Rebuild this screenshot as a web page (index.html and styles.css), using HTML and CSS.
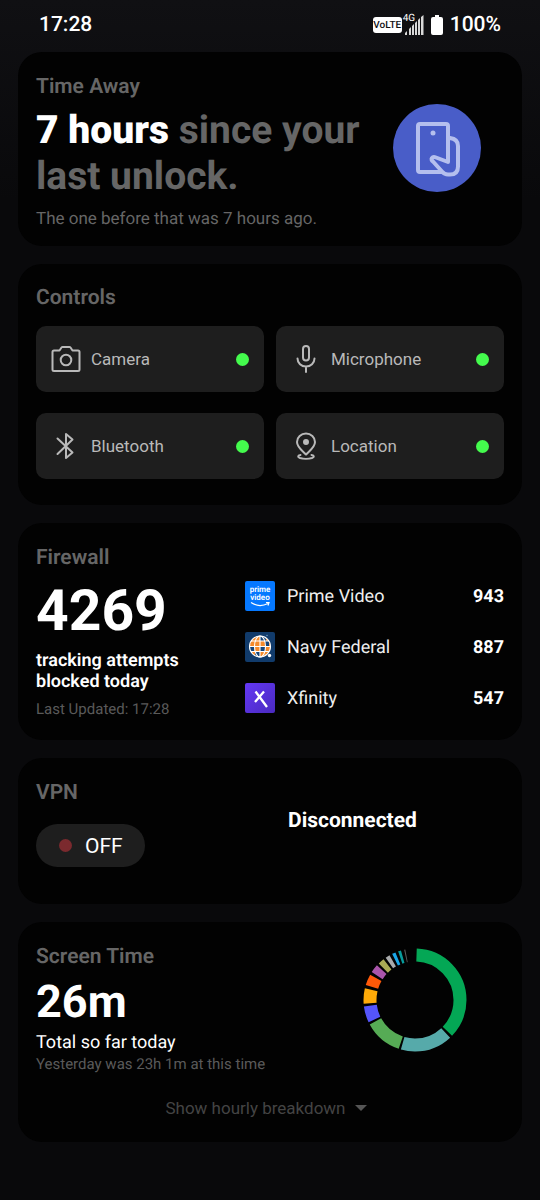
FILE: index.html
```html
<!DOCTYPE html>
<html lang="en">
<head>
<meta charset="utf-8">
<meta name="viewport" content="width=device-width, initial-scale=1">
<title>Privacy dashboard</title>
<link rel="stylesheet" href="styles.css">
</head>
<body>
<header class="status-bar">
  <time class="clock">17:28</time>
  <div class="indicators">
    <span class="volte">VoLTE</span>
    <span class="signal">
      <span class="network">4G</span>
      <svg width="20" height="20" viewBox="0 0 20 20" aria-hidden="true">
        <g fill="#d8d8d8"><path d="M0 20v-2l2-2v4zM4 20v-6l2-2v8zM7 20v-9l2-2v11zM10 20V8l2-2v14zM13 20V5l2-2v17zM16 20V2l2.500-2v20z"/></g>
      </svg>
    </span>
    <svg class="battery" width="12" height="20" viewBox="0 0 12 20" aria-hidden="true"><path fill="#fff" d="M4 0h4v2h2q2 0 2 2v14q0 2-2 2H2q-2 0-2-2V4q0-2 2-2h2z"/></svg>
    <span class="percent">100%</span>
  </div>
</header>

<main class="cards">
  <section class="card time-away">
    <div class="time-text">
      <h2 class="title">Time Away</h2>
      <p class="headline"><strong>7 hours</strong> since your last unlock.</p>
      <p class="note">The one before that was 7 hours ago.</p>
    </div>
    <svg class="badge" width="88" height="88" viewBox="0 0 88 88" aria-hidden="true">
      <circle cx="44" cy="44" r="44" fill="#495dc8"/>
      <g fill="none" stroke="#b5bfee" stroke-width="4" stroke-linejoin="round" stroke-linecap="round">
        <path d="M48 68H27q-2 0-2-2V22q0-2 2-2h26q2 0 2 2v36L43 53.500c-4-1.500-6 2-3 4L49 67.500q2.500 3 6 3h2q8 0 8-8V42q0-7-8-8"/>
      </g>
      <circle cx="40" cy="29" r="2.500" fill="#b5bfee"/>
    </svg>
  </section>

  <section class="card controls">
    <h2 class="title">Controls</h2>
    <div class="tiles">
      <button class="tile" type="button">
        <svg class="tile-icon" width="30" height="30" viewBox="0 0 30 30" aria-hidden="true"><path d="M3 6.500h5.500l2-3q.4-.5 1-.5h7q.6 0 1 .5l2 3H27q1.500 0 1.500 1.500v17.500q0 1.500-1.500 1.500H3q-1.500 0-1.500-1.500V8q0-1.500 1.500-1.500z"/><circle cx="15" cy="16" r="5.300"/></svg>
        <span class="tile-name">Camera</span><span class="dot on"></span>
      </button>
      <button class="tile" type="button">
        <svg class="tile-icon" width="30" height="30" viewBox="0 0 30 30" aria-hidden="true"><rect x="12" y="2" width="6" height="14.500" rx="3"/><path d="M6.500 14.500a8.500 8 0 0 0 17 0M15 22.500v5.500"/></svg>
        <span class="tile-name">Microphone</span><span class="dot on"></span>
      </button>
      <button class="tile" type="button">
        <svg class="tile-icon" width="30" height="30" viewBox="0 0 30 30" aria-hidden="true"><path d="M6.500 7.500 21.500 21.500 15 27V3l6.500 5.500-15 14.500"/></svg>
        <span class="tile-name">Bluetooth</span><span class="dot on"></span>
      </button>
      <button class="tile" type="button">
        <svg class="tile-icon" width="30" height="30" viewBox="0 0 30 30" aria-hidden="true"><path d="M15 23.500C12 20 6 16.500 6 11a9 8.500 0 0 1 18 0c0 5.500-6 9-9 12.500zM9.500 24c-3 .4-3 2-.5 3 3 1 9 1 12 0 2.500-1 2.500-2.600-.5-3"/><circle cx="15" cy="11" r="2" fill="#b9b9b9"/></svg>
        <span class="tile-name">Location</span><span class="dot on"></span>
      </button>
    </div>
  </section>

  <section class="card firewall">
    <div class="summary">
      <h2 class="title">Firewall</h2>
      <p class="blocked">4269</p>
      <p class="caption">tracking attempts blocked today</p>
      <p class="updated">Last Updated: 17:28</p>
    </div>
    <ul class="apps">
      <li class="app">
        <svg width="30" height="30" viewBox="0 0 30 30" aria-hidden="true"><rect width="30" height="30" rx="2" fill="#0578ff"/><g class="prime-word"><text x="15" y="11">prime</text><text x="15" y="19">video</text></g><path d="M6 21.500q8 5.500 17 1M21 21.500h3l-1 3" fill="none" stroke="#fff" stroke-width="1.200"/></svg>
        <span class="app-name">Prime Video</span><b class="count">943</b>
      </li>
      <li class="app">
        <svg width="30" height="30" viewBox="0 0 30 30" aria-hidden="true"><rect width="30" height="30" rx="2" fill="#113b6b"/><circle cx="15" cy="14.500" r="10.500" fill="#f58b2c"/><path fill="#174579" d="M15 4h6v5h-6zM4.500 14h5v5h-5zM10 19h5v5h-5zM15 14h5v5h-5zM20 9h4v5h-4z"/><g fill="none" stroke="#fff" stroke-width="1.100"><circle cx="15" cy="14.500" r="10.500"/><ellipse cx="15" cy="14.500" rx="5.500" ry="10.500"/><path d="M15 4v21M4.500 14.500h21M6 9h18M6 19.500h18"/></g><circle cx="24.500" cy="23.500" r="1.700" fill="#fff"/><circle cx="22" cy="3.500" r=".7" fill="#7fa8d0"/></svg>
        <span class="app-name">Navy Federal</span><b class="count">887</b>
      </li>
      <li class="app">
        <svg width="30" height="30" viewBox="0 0 30 30" aria-hidden="true"><defs><linearGradient id="violet" x2="1" y2="1"><stop stop-color="#6438f5"/><stop offset="1" stop-color="#4a2abf"/></linearGradient></defs><rect width="30" height="30" rx="2" fill="url(#violet)"/><path d="M10.500 8.500 22 24M19 8.500 10 19" fill="none" stroke="#fff" stroke-width="2.300"/></svg>
        <span class="app-name">Xfinity</span><b class="count">547</b>
      </li>
    </ul>
  </section>

  <section class="card vpn">
    <div>
      <h2 class="title">VPN</h2>
      <button class="pill" type="button"><span class="dot off"></span>OFF</button>
    </div>
    <p class="vpn-state">Disconnected</p>
  </section>

  <section class="card screen-time">
    <div class="usage">
      <div>
        <h2 class="title">Screen Time</h2>
        <p class="total">26m</p>
        <p class="total-label">Total so far today</p>
        <p class="updated yesterday">Yesterday was 23h 1m at this time</p>
      </div>
      <svg class="donut" width="104" height="104" viewBox="-52 -52 104 104" role="img" aria-label="Screen time by app">
        <g fill="none" stroke-width="13" transform="rotate(-90)">
          <circle r="45" pathLength="360" stroke="#04a755" stroke-dasharray="132 228" stroke-dashoffset="-2"/>
          <circle r="45" pathLength="360" stroke="#56aaaa" stroke-dasharray="59 301" stroke-dashoffset="-137"/>
          <circle r="45" pathLength="360" stroke="#56ab55" stroke-dasharray="43 317" stroke-dashoffset="-198.500"/>
          <circle r="45" pathLength="360" stroke="#5555fb" stroke-dasharray="18.500 341.500" stroke-dashoffset="-244.300"/>
          <circle r="45" pathLength="360" stroke="#ffaa08" stroke-dasharray="17.500 342.500" stroke-dashoffset="-265.700"/>
          <circle r="45" pathLength="360" stroke="#ff5908" stroke-dasharray="12.500 347.500" stroke-dashoffset="-287"/>
          <circle r="45" pathLength="360" stroke="#aa55aa" stroke-dasharray="9.500 350.500" stroke-dashoffset="-302.800"/>
          <circle r="45" pathLength="360" stroke="#aaaa55" stroke-dasharray="7 353" stroke-dashoffset="-315.300"/>
          <circle r="45" pathLength="360" stroke="#a9abab" stroke-dasharray="5 355" stroke-dashoffset="-325.300"/>
          <circle r="45" pathLength="360" stroke="#1aa7e8" stroke-dasharray="4 356" stroke-dashoffset="-333.600"/>
          <circle r="45" pathLength="360" stroke="#089c9c" stroke-dasharray="3.300 356.700" stroke-dashoffset="-340.800"/>
          <circle r="45" pathLength="360" stroke="#5a5a5a" stroke-dasharray="1.300 358.700" stroke-dashoffset="-347.800"/>
        </g>
      </svg>
    </div>
    <button class="breakdown" type="button">Show hourly breakdown
      <svg width="12" height="6" viewBox="0 0 12 6" aria-hidden="true"><path fill="#555" d="M0 0h12L6 6z"/></svg>
    </button>
  </section>
</main>
</body>
</html>
```
FILE: styles.css
```css
* { box-sizing: border-box; }
body {
  margin: 0;
  min-height: 100vh;
  background: linear-gradient(#101013, #09090b 200px, #09090b);
  color: #fff;
  font-family: Roboto, sans-serif;
  text-rendering: geometricPrecision;
}
h2, p, ul { margin: 0; padding: 0; }
button {
  margin: 0;
  border: 0;
  font: inherit;
  cursor: pointer;
}
svg { display: block; flex: none; }

.status-bar {
  display: flex;
  justify-content: space-between;
  align-items: center;
  height: 52px;
  padding: 0 39px 2px;
  font-size: 21px;
  font-weight: 500;
}
.indicators { display: flex; align-items: center; }
.volte {
  width: 29px;
  height: 16px;
  border-radius: 3px;
  background: #fff;
  color: #101013;
  font: 500 10px/17px Roboto, sans-serif;
  text-align: center;
}
.signal {
  position: relative;
  display: flex;
  padding-left: 3px;
}
.network {
  position: absolute;
  left: 1px;
  top: -1px;
  font-size: 10px;
  line-height: 10px;
  font-weight: 400;
}
.battery { margin: 0 7px 0 6px; }

.cards {
  display: grid;
  gap: 18px;
  padding: 0 18px 57px;
}
.card {
  padding: 22px 18px;
  border-radius: 24px;
  background: #020202;
}
.title {
  padding-top: 1px;
  color: #666;
  font-size: 21px;
  line-height: 24px;
  font-weight: 600;
}

.time-away {
  display: flex;
  justify-content: space-between;
  align-items: center;
  padding-right: 41px;
  padding-bottom: 15px;
}
.time-text { flex: 1; }
.headline {
  padding-top: 8px;
  color: #666;
  font-size: 39px;
  line-height: 46px;
  font-weight: 700;
}
.headline strong { color: #fff; }
.note {
  padding-top: 9px;
  color: #666;
  font-size: 17px;
  line-height: 23px;
}
.badge { margin-bottom: 10px; }

.controls {
  padding-top: 21px;
  padding-bottom: 26px;
}
.tiles {
  display: grid;
  grid-template-columns: 1fr 1fr;
  gap: 21px 12px;
  padding-top: 16px;
}
.tile {
  display: flex;
  align-items: center;
  gap: 10px;
  height: 66px;
  padding: 0 15px;
  border-radius: 10px;
  background: #1e1e1e;
  color: #b9b9b9;
  font-size: 17px;
  text-align: left;
}
.tile-icon {
  fill: none;
  stroke: #b9b9b9;
  stroke-width: 2;
  stroke-linecap: round;
  stroke-linejoin: round;
}
.tile-name { flex: 1; }
.dot {
  width: 13px;
  height: 13px;
  border-radius: 50%;
}
.on { background: #44fb4d; }
.off { background: #7b2a2e; }

.firewall {
  display: grid;
  grid-template-columns: 209px 1fr;
  padding-bottom: 21px;
}
.blocked {
  padding-top: 7px;
  font-size: 57px;
  line-height: 68px;
  font-weight: 700;
}
.caption {
  max-width: 160px;
  padding-top: 5px;
  font-size: 18px;
  line-height: 21px;
  font-weight: 600;
}
.updated {
  padding-top: 7px;
  color: #5a5a5a;
  font-size: 15px;
  line-height: 20px;
}
.apps {
  display: grid;
  align-content: start;
  gap: 21px;
  padding-top: 36px;
  list-style: none;
}
.app {
  display: flex;
  align-items: center;
  gap: 12px;
  font-size: 18px;
}
.app-name { flex: 1; color: #eee; }
.count { font-weight: 700; }
.prime-word {
  fill: #fff;
  font: 600 8px Roboto, sans-serif;
  text-anchor: middle;
}

.vpn {
  display: grid;
  grid-template-columns: 1fr 1fr;
  padding-bottom: 37px;
}
.pill {
  display: flex;
  align-items: center;
  gap: 13px;
  height: 43px;
  margin-top: 19px;
  padding: 0 22px 0 23px;
  border-radius: 22px;
  background: #1e1e1e;
  color: #fff;
  font-size: 21px;
}
.vpn-state {
  padding: 29px 0 0 18px;
  font-size: 21px;
  line-height: 24px;
  font-weight: 700;
}

.usage {
  display: flex;
  justify-content: space-between;
  align-items: flex-start;
  padding-right: 37px;
}
.donut { margin-top: 4px; }
.total {
  padding-top: 7px;
  font-size: 45px;
  line-height: 52px;
  font-weight: 700;
}
.total-label {
  padding-top: 4px;
  font-size: 18px;
  line-height: 22px;
}
.yesterday { padding-top: 0; }
.breakdown {
  display: flex;
  align-items: center;
  gap: 9px;
  margin: 22px auto 0;
  padding: 0 8px 0 0;
  background: none;
  color: #444;
  font-size: 17px;
  line-height: 24px;
}
```
